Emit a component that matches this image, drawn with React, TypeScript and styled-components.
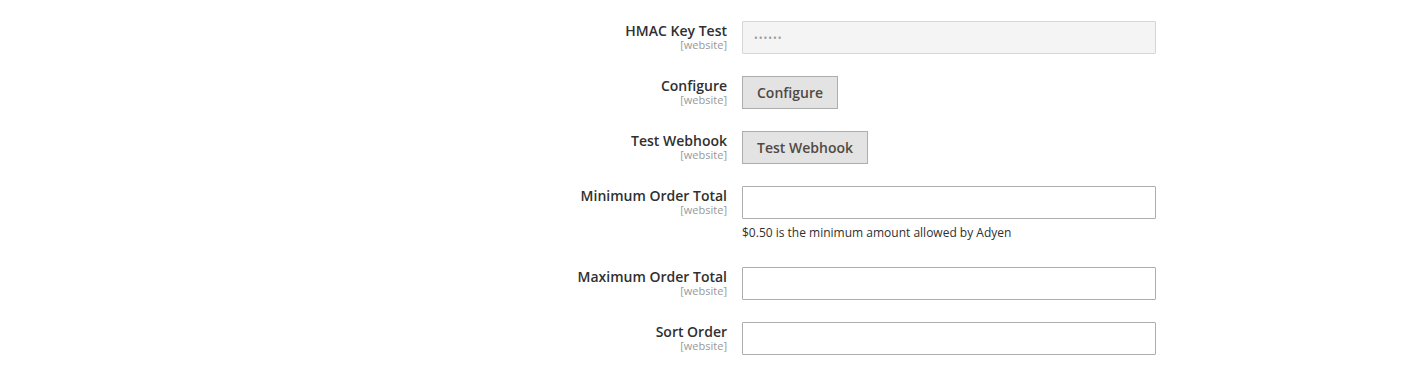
import styled, { createGlobalStyle } from "styled-components";

const Global = createGlobalStyle`
  html, body {
    margin: 0;
    padding: 0;
    background: #ffffff;
    font-family: "Open Sans", "Liberation Sans", sans-serif;
    color: #303030;
  }
`;

const Form = styled.div`
  display: flex;
  flex-direction: column;
  gap: 22px;
  padding-top: 21px;
`;

const Row = styled.div`
  display: grid;
  grid-template-columns: 727px 414px;
  column-gap: 15px;
  align-items: start;
`;

const Label = styled.label`
  display: flex;
  flex-direction: column;
  align-items: flex-end;
  text-align: right;
  padding-top: 1px;
`;

const LabelText = styled.span`
  font-size: 14px;
  font-weight: 600;
  line-height: 17px;
  color: #303030;
`;

const Scope = styled.span`
  font-size: 11px;
  line-height: 12px;
  color: #999999;
`;

const Value = styled.div`
  display: flex;
  flex-direction: column;
  align-items: flex-start;
`;

const Input = styled.input`
  box-sizing: border-box;
  width: 414px;
  height: 33px;
  margin: 0;
  padding: 0 11px;
  border: 1px solid #adadad;
  border-radius: 1px;
  background: #ffffff;
  font-family: "Open Sans", "Liberation Sans", sans-serif;
  font-size: 14px;
  color: #303030;
  outline: none;

  &:disabled {
    background: #f4f4f4;
    border-color: #d6d6d6;
    color: #999999;
    font-size: 10px;
    letter-spacing: 1px;
  }
`;

const Button = styled.button`
  box-sizing: border-box;
  height: 33px;
  padding: 0 14px;
  margin: 0;
  border: 1px solid #adadad;
  border-radius: 0;
  background: #e3e3e3;
  font-family: "Open Sans", "Liberation Sans", sans-serif;
  font-size: 14px;
  font-weight: 600;
  color: #514943;
  cursor: pointer;
`;

const Note = styled.div`
  margin-top: 5px;
  margin-bottom: 3px;
  font-size: 12px;
  line-height: 18px;
  color: #303030;
`;

interface Field {
  label: string;
  kind: "secret" | "button" | "text";
  note?: string;
}

const fields: Array<Field> = [
  { label: "HMAC Key Test", kind: "secret" },
  { label: "Configure", kind: "button" },
  { label: "Test Webhook", kind: "button" },
  {
    label: "Minimum Order Total",
    kind: "text",
    note: "$0.50 is the minimum amount allowed by Adyen",
  },
  { label: "Maximum Order Total", kind: "text" },
  { label: "Sort Order", kind: "text" },
];

const Control = ({ field }: { field: Field }) => {
  if (field.kind === "button") return <Button type="button">{field.label}</Button>;
  if (field.kind === "secret")
    return <Input type="text" disabled value={"\u2022\u2022\u2022\u2022\u2022\u2022"} readOnly />;
  return <Input type="text" defaultValue="" />;
};

export default function App() {
  return (
    <>
      <Global />
      <Form>
        {fields.map((f) => (
          <Row key={f.label}>
            <Label>
              <LabelText>{f.label}</LabelText>
              <Scope>[website]</Scope>
            </Label>
            <Value>
              <Control field={f} />
              {f.note && <Note>{f.note}</Note>}
            </Value>
          </Row>
        ))}
      </Form>
    </>
  );
}
